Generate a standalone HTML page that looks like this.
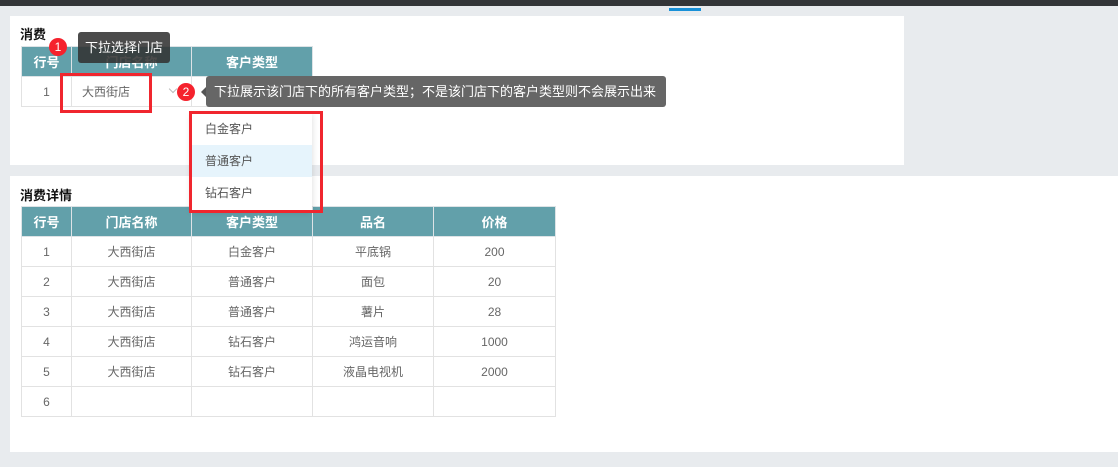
<!DOCTYPE html>
<html><head><meta charset="utf-8"><style>
*{box-sizing:border-box;margin:0;padding:0}
body{width:1118px;height:467px;background:#e8ebee;position:relative;overflow:hidden;font-family:"Liberation Sans","Noto Sans CJK SC",sans-serif;font-size:12px;color:#666}
.a{position:absolute}
.top{left:0;top:0;width:1118px;height:6px;background:#333538}
.panel{background:#fff}
.title{font-size:13px;font-weight:bold;color:#111}
table{border-collapse:collapse;position:absolute;table-layout:fixed}
th{background:#62a0aa;color:#fff;font-weight:bold;font-size:13px;height:30px;border:1px solid #dde3e6;text-align:center}
td{height:30px;border:1px solid #e2e2e2;text-align:center;color:#666}
.tip{background:rgba(80,80,80,.9);color:#fff;font-size:13px;border-radius:3px;line-height:31px;padding:0 8px}
.badge{width:18px;height:18px;border-radius:50%;background:#f5222d;color:#fff;font-size:12px;text-align:center;line-height:18px}
.red{border:3px solid #f0262e}
.dd{background:#fff;box-shadow:0 2px 6px rgba(0,0,0,.15)}
.dd div{height:32px;line-height:32px;padding-left:14px;color:#555}
</style></head><body>
<div class="a top"></div>
<div class="a" style="left:669px;top:8px;width:32px;height:3px;background:#1890d8"></div>
<div class="a panel" style="left:10px;top:16px;width:894px;height:149px"></div>
<div class="a panel" style="left:10px;top:176px;width:1108px;height:276px"></div>
<div class="a title" style="left:20px;top:24px">消费</div>
<div class="a title" style="left:20px;top:185px">消费详情</div>

<table style="left:21px;top:46px;width:291px">
<colgroup><col style="width:50px"><col style="width:120px"><col style="width:121px"></colgroup>
<tr><th>行号</th><th>门店名称</th><th>客户类型</th></tr>
<tr><td>1</td><td style="text-align:left;padding-left:10px">大西街店</td><td></td></tr>
</table>
<div class="a" style="left:170px;top:86px;width:6px;height:6px;border-right:1px solid #bbb;border-bottom:1px solid #bbb;transform:rotate(45deg)"></div>

<table style="left:21px;top:206px;width:534px">
<colgroup><col style="width:50px"><col style="width:120px"><col style="width:121px"><col style="width:121px"><col style="width:122px"></colgroup>
<tr><th>行号</th><th>门店名称</th><th>客户类型</th><th>品名</th><th>价格</th></tr>
<tr><td>1</td><td>大西街店</td><td>白金客户</td><td>平底锅</td><td>200</td></tr>
<tr><td>2</td><td>大西街店</td><td>普通客户</td><td>面包</td><td>20</td></tr>
<tr><td>3</td><td>大西街店</td><td>普通客户</td><td>薯片</td><td>28</td></tr>
<tr><td>4</td><td>大西街店</td><td>钻石客户</td><td>鸿运音响</td><td>1000</td></tr>
<tr><td>5</td><td>大西街店</td><td>钻石客户</td><td>液晶电视机</td><td>2000</td></tr>
<tr><td>6</td><td></td><td></td><td></td><td></td></tr>
</table>

<div class="a dd" style="left:191px;top:113px;width:121px;height:97px">
<div>白金客户</div><div style="background:#e6f4fc">普通客户</div><div>钻石客户</div>
</div>
<div class="a red" style="left:60px;top:73px;width:92px;height:40px"></div>
<div class="a red" style="left:189px;top:111px;width:134px;height:102px"></div>

<div class="a tip" style="left:78px;top:32px;height:31px;background:rgba(50,50,50,.88);padding:0 7px">下拉选择门店</div>
<div class="a badge" style="left:49px;top:38px">1</div>
<div class="a" style="left:201px;top:87px;width:0;height:0;border:5px solid transparent;border-right-color:#555;border-left:0"></div>
<div class="a tip" style="left:206px;top:76px;width:460px;height:31px;background:#666">下拉展示该门店下的所有客户类型；不是该门店下的客户类型则不会展示出来</div>
<div class="a badge" style="left:177px;top:83px">2</div>
</body></html>
